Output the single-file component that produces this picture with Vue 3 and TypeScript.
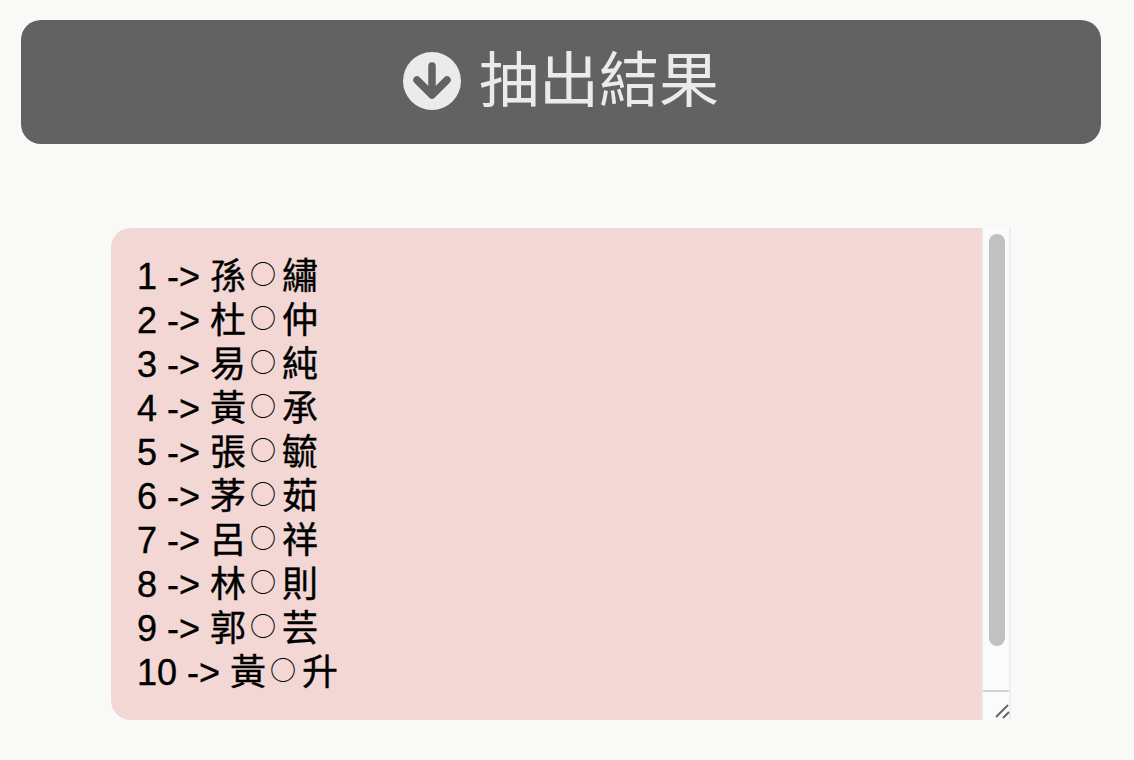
<script setup lang="ts">
const rows: [string, string, string][] = [
  ['1', '孫', '繡'],
  ['2', '杜', '仲'],
  ['3', '易', '純'],
  ['4', '黃', '承'],
  ['5', '張', '毓'],
  ['6', '茅', '茹'],
  ['7', '呂', '祥'],
  ['8', '林', '則'],
  ['9', '郭', '芸'],
  ['10', '黃', '升'],
]
</script>

<template>
  <main class="page">
    <button class="extract" type="button">
      <svg class="icon" viewBox="0 0 58 58" aria-hidden="true">
        <circle cx="29" cy="29" r="29" fill="#ebebeb" />
        <path d="M29 14V42M14 28L29 43L44 28" fill="none" stroke="#636363" stroke-width="7.5" stroke-linecap="round" stroke-linejoin="round" />
      </svg>
      <span class="label">抽出結果</span>
    </button>
    <section class="result">
      <div class="content">
        <div v-for="row in rows" :key="row[0]" class="line">{{ row[0] }} -&gt; {{ row[1] }}<span class="mark">○</span>{{ row[2] }}</div>
      </div>
      <div class="rail">
        <div class="track"><div class="thumb"></div></div>
        <div class="corner">
          <svg viewBox="0 0 26 28" class="grip" aria-hidden="true">
            <path d="M13 25L25 13M20 26L26 20" stroke="#666" stroke-width="2" fill="none" />
          </svg>
        </div>
      </div>
    </section>
  </main>
</template>

<style scoped>
.page {
  display: flex;
  flex-direction: column;
  align-items: flex-start;
  height: 760px;
  padding: 20px 0 0 21px;
  box-sizing: border-box;
  overflow: hidden;
  background: #f9f9f7;
  font-family: "Liberation Sans", "Noto Sans CJK TC", sans-serif;
}
.extract {
  display: flex;
  align-items: center;
  justify-content: center;
  gap: 18px;
  width: 1080px;
  height: 124px;
  padding: 0 0 2px;
  border: 0;
  border-radius: 20px;
  background: #626262;
  color: #ebebeb;
  font: inherit;
  font-size: 60px;
  line-height: 70px;
}
.icon {
  width: 58px;
  height: 58px;
}
.label {
  padding-top: 2px;
}
.result {
  display: flex;
  width: 900px;
  height: 492px;
  margin: 84px 0 0 90px;
  border-radius: 20px 0 0 20px;
  overflow: hidden;
  background: #f2d7d4;
}
.content {
  flex: 1;
  padding: 27px 26px 0;
  color: #000;
  font-size: 36px;
  line-height: 44px;
  -webkit-text-stroke: 0.4px #000;
}
.line {
  height: 44px;
  white-space: pre;
}
.mark {
  display: inline-block;
  box-sizing: border-box;
  width: 36px;
  height: 44px;
  padding-right: 2px;
  text-align: center;
  vertical-align: top;
  font-family: "Noto Sans CJK TC", sans-serif;
  font-size: 26px;
  line-height: 36px;
  -webkit-text-stroke: 0;
}
.rail {
  display: flex;
  flex: none;
  flex-direction: column;
  box-sizing: border-box;
  width: 30px;
  background: #fbfbfb;
  border-left: 2px solid #e9e6e5;
  border-right: 2px solid #efefef;
}
.track {
  flex: 1;
  padding: 6px 4px 0 6px;
}
.thumb {
  width: 16px;
  height: 412px;
  border-radius: 8px;
  background: #c1c1c1;
}
.corner {
  display: flex;
  flex: none;
  height: 30px;
  border-top: 2px solid #d4d4d4;
  box-sizing: border-box;
}
.grip {
  width: 100%;
  height: 100%;
  overflow: visible;
}
</style>

<style>
html, body {
  background: #f9f9f7;
}
</style>
